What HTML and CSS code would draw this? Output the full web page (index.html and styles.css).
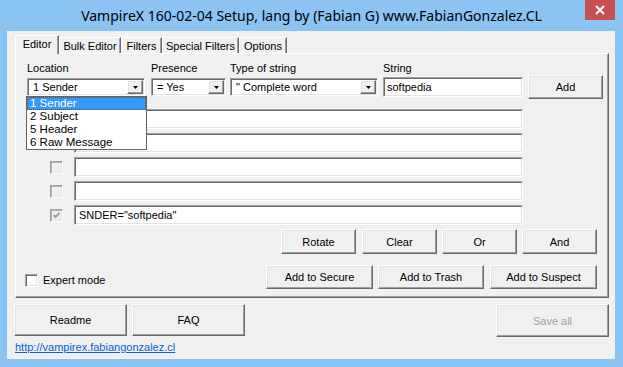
FILE: index.html
```html
<!DOCTYPE html>
<html>
<head>
<meta charset="utf-8">
<link rel="stylesheet" href="styles.css">
</head>
<body>
<div class="window">
  <div class="titlebar">
    <div class="tb-spacer"></div>
    <div class="title">VampireX 160-02-04 Setup, lang by (Fabian G) www.FabianGonzalez.CL</div>
    <div class="close">
      <svg width="10" height="10" viewBox="0 0 10 10"><path d="M1 1L9 9M9 1L1 9" stroke="#fff" stroke-width="2" fill="none"/></svg>
    </div>
  </div>
  <div class="client">
    <div class="tabs">
      <div class="tab active w-editor">Editor</div>
      <div class="tab w-bulk">Bulk Editor</div>
      <div class="tab w-filters">Filters</div>
      <div class="tab w-special">Special Filters</div>
      <div class="tab w-options">Options</div>
    </div>
    <div class="panel">
      <div class="top-row">
        <div class="field f-loc">
          <div class="label">Location</div>
          <div class="combo sunken">
            <span class="val">1 Sender</span>
            <span class="drop raised"><svg width="5" height="3" viewBox="0 0 5 3"><path d="M0 0H5L2.5 3Z" fill="#000"/></svg></span>
            <div class="list">
              <div class="item sel">1 Sender</div>
              <div class="item">2 Subject</div>
              <div class="item">5 Header</div>
              <div class="item">6 Raw Message</div>
            </div>
          </div>
        </div>
        <div class="field f-pres">
          <div class="label">Presence</div>
          <div class="combo sunken">
            <span class="val">= Yes</span>
            <span class="drop raised"><svg width="5" height="3" viewBox="0 0 5 3"><path d="M0 0H5L2.5 3Z" fill="#000"/></svg></span>
          </div>
        </div>
        <div class="field f-type">
          <div class="label">Type of string</div>
          <div class="combo sunken">
            <span class="val">" Complete word</span>
            <span class="drop raised"><svg width="5" height="3" viewBox="0 0 5 3"><path d="M0 0H5L2.5 3Z" fill="#000"/></svg></span>
          </div>
        </div>
        <div class="field f-str">
          <div class="label">String</div>
          <div class="input sunken">softpedia</div>
        </div>
        <div class="btn raised btn-add">Add</div>
      </div>
      <div class="rows">
        <div class="row"><span class="chk dis"></span><div class="input sunken line"></div></div>
        <div class="row"><span class="chk dis"></span><div class="input sunken line"></div></div>
        <div class="row"><span class="chk dis"></span><div class="input sunken line"></div></div>
        <div class="row"><span class="chk dis"></span><div class="input sunken line"></div></div>
        <div class="row"><span class="chk dis"><svg width="9" height="9" viewBox="0 0 9 9"><path d="M1.5 4L3.5 6L7.5 2" stroke="#a0a0a0" stroke-width="2" fill="none"/></svg></span><div class="input sunken line">SNDER="softpedia"</div></div>
      </div>
      <div class="ops">
        <div class="btn raised op">Rotate</div>
        <div class="btn raised op g6">Clear</div>
        <div class="btn raised op g5">Or</div>
        <div class="btn raised op g5">And</div>
      </div>
      <div class="bottom-row">
        <div class="expert"><span class="chk white"></span><span class="expert-label">Expert mode</span></div>
        <div class="btn raised add w107">Add to Secure</div>
        <div class="btn raised add w106 g5">Add to Trash</div>
        <div class="btn raised add w107 g6">Add to Suspect</div>
      </div>
    </div>
    <div class="footer">
      <div class="btn raised big">Readme</div>
      <div class="btn raised big g5">FAQ</div>
      <div class="btn raised big disabled push">Save all</div>
    </div>
    <a class="link" href="#">http://vampirex.fabiangonzalez.cl</a>
  </div>
</div>
</body>
</html>
```

FILE: styles.css
```css
* { box-sizing: border-box; }
html, body { margin: 0; padding: 0; }
body {
  width: 623px;
  height: 367px;
  overflow: hidden;
  background: #8bc3f2;
  font-family: "Liberation Sans", Arial, sans-serif;
  font-size: 11px;
  color: #000;
}
.window { width: 623px; height: 367px; }

.titlebar {
  height: 31px;
  display: flex;
  align-items: flex-start;
}
.tb-spacer { width: 38px; flex: 0 0 38px; }
.title {
  flex: 1;
  text-align: center;
  font-family: "Noto Sans", "Open Sans", sans-serif;
  font-size: 14px;
  line-height: 20px;
  padding-top: 6px;
  color: #000;
  white-space: nowrap;
}
.close {
  width: 30px;
  height: 20px;
  margin-right: 8px;
  background: #c75050;
  display: flex;
  align-items: center;
  justify-content: center;
}

.client {
  margin: 0 8px 0 7px;
  height: 328px;
  background: #f0f0f0;
  padding: 4px 6px 0 7px;
}

/* 3D borders */
.raised {
  border: 1px solid;
  border-color: #fff #696969 #696969 #fff;
  box-shadow: inset -1px -1px 0 #a0a0a0, inset 1px 1px 0 #e3e3e3;
  background: #f0f0f0;
}
.sunken {
  border: 1px solid;
  border-color: #a0a0a0 #fff #fff #a0a0a0;
  box-shadow: inset 1px 1px 0 #696969, inset -1px -1px 0 #e3e3e3;
  background: #fff;
}

/* tabs */
.tabs {
  display: flex;
  align-items: flex-end;
  height: 18px;
  margin-left: 1px;
}
.tab {
  height: 16px;
  border-top: 1px solid #fff;
  border-left: 1px solid #fff;
  border-right: 1px solid #696969;
  box-shadow: inset -1px 0 0 #a0a0a0;
  display: flex;
  align-items: center;
  justify-content: center;
  background: #f0f0f0;
  padding-top: 1px;
}
.tab.active {
  height: 19px;
  margin-bottom: -1px;
  position: relative;
  z-index: 1;
  padding-top: 0;
  padding-bottom: 2px;
}
.w-editor { width: 44px; }
.w-bulk { width: 62px; }
.w-filters { width: 41px; }
.w-special { width: 77px; }
.w-options { width: 48px; }

.panel {
  width: 594px;
  height: 245px;
  margin-left: 1px;
  border: 1px solid;
  border-color: #fff #696969 #696969 #fff;
  box-shadow: inset -1px -1px 0 #a0a0a0;
  padding: 8px 0 0 11px;
}

.top-row {
  display: flex;
  align-items: flex-start;
}
.field { display: flex; flex-direction: column; }
.label { height: 15px; line-height: 13px; }
.f-loc { width: 118px; margin-right: 6px; }
.f-pres { width: 75px; margin-right: 4px; }
.f-type { width: 148px; margin-right: 5px; }
.f-str { width: 140px; margin-right: 5px; }

.combo {
  position: relative;
  height: 18px;
  margin-top: 1px;
  display: flex;
  align-items: center;
  padding: 0 1px 0 3px;
}
.combo .val { flex: 1; padding-left: 2px; white-space: nowrap; overflow: hidden; }
.drop {
  width: 16px;
  height: 14px;
  display: flex;
  align-items: center;
  justify-content: center;
}
.list {
  position: absolute;
  left: -2px;
  top: 17px;
  width: 121px;
  height: 54px;
  background: #fff;
  border: 1px solid #646464;
  z-index: 5;
}
.item {
  height: 13px;
  line-height: 13px;
  padding-left: 3px;
  font-size: 11.5px;
  white-space: nowrap;
}
.item.sel {
  background: #3399ff;
  color: #fff;
  outline: 1px dotted #7a4a00;
  outline-offset: -1px;
}

.input {
  height: 20px;
  padding: 0 4px;
  line-height: 18px;
  white-space: nowrap;
}
.f-str .input { padding-left: 3px; }

.btn {
  display: flex;
  align-items: center;
  justify-content: center;
  white-space: nowrap;
}
.btn-add { width: 75px; height: 24px; margin-top: 13px; }

.rows { margin-top: 10px; display: flex; flex-direction: column; gap: 4px; }
.row { display: flex; align-items: center; height: 20px; }
.chk {
  width: 13px;
  height: 13px;
  border: 1px solid;
  border-color: #a0a0a0 #fff #fff #a0a0a0;
  display: flex;
  align-items: center;
  justify-content: center;
}
.chk.dis {
  margin-left: 23px;
  background: #f0f0f0;
  box-shadow: inset 1px 1px 0 #b4b4b4, inset -1px -1px 0 #e3e3e3;
}
.chk.white {
  background: #fff;
  box-shadow: inset 1px 1px 0 #696969, inset -1px -1px 0 #e3e3e3;
}
.line { width: 449px; margin-left: 11px; }

.ops { display: flex; margin-top: 4px; margin-left: 254px; }
.op { width: 75px; height: 25px; }
.g5 { margin-left: 5px; }
.g6 { margin-left: 6px; }

.bottom-row { display: flex; align-items: flex-start; margin-top: 11px; }
.expert {
  flex: 0 0 241px;
  margin-left: -2px;
  margin-top: 9px;
  display: flex;
  align-items: center;
}
.expert-label { margin-left: 5px; line-height: 13px; }
.add { height: 24px; }
.w107 { width: 107px; }
.w106 { width: 106px; }

.footer { display: flex; margin-top: 6px; }
.big { width: 113px; height: 32px; }
.push { margin-left: auto; width: 113px; height: 33px; }
.disabled { color: #a0a0a0; }

.link {
  display: inline-block;
  margin-top: 4px;
  margin-left: 1px;
  color: #0066cc;
  line-height: 13px;
}
```
